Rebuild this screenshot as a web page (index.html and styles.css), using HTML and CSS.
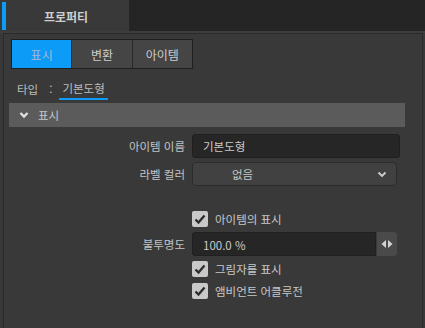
FILE: index.html
```html
<!DOCTYPE html>
<html lang="ko">
  <head>
    <meta charset="UTF-8" />
    <meta name="viewport" content="width=device-width, initial-scale=1.0" />
    <title>프로퍼티</title>
    <link rel="stylesheet" href="styles.css">
  </head>
  <body>
    <div class="tabbar">
      <div class="tab">
        <span class="tab-mark"></span>
        <span class="tab-title">프로퍼티</span>
      </div>
    </div>
    <div class="tabbar-line"></div>

    <div class="panel">
      <div class="segmented">
        <button class="seg active">표시</button>
        <button class="seg">변환</button>
        <button class="seg">아이템</button>
      </div>

      <div class="type-row">
        <span>타입</span>
        <span class="colon">:</span>
        <span class="type-value">기본도형</span>
      </div>

      <div class="section-head">
        <svg class="chev" width="10" height="8" viewBox="0 0 10 8">
          <path d="M1.5 2 L5 5.5 L8.5 2" fill="none" stroke="#e2e2e2" stroke-width="2.4" />
        </svg>
        <span>표시</span>
      </div>

      <div class="form">
        <div class="row">
          <label class="label">아이템 이름</label>
          <div class="text-input">기본도형</div>
        </div>

        <div class="row">
          <label class="label">라벨 컬러</label>
          <div class="select">
            <span>없음</span>
            <svg width="10" height="7" viewBox="0 0 10 7">
              <path d="M1.5 1.5 L5 5 L8.5 1.5" fill="none" stroke="#cfcfcf" stroke-width="1.8" />
            </svg>
          </div>
        </div>

        <div class="spacer"></div>

        <div class="row check-row">
          <span class="label"></span>
          <label class="check">
            <span class="box">
              <svg width="16" height="16" viewBox="0 0 16 16">
                <path d="M3.5 8.5 L6.5 11.5 L12.5 4.5" fill="none" stroke="#2e2e2e" stroke-width="2.4" />
              </svg>
            </span>
            아이템의 표시
          </label>
        </div>

        <div class="row spin-row">
          <label class="label">불투명도</label>
          <div class="spin">
            <div class="spin-input">100.0 %</div>
            <div class="spin-btn">
              <svg width="14" height="10" viewBox="0 0 14 10">
                <path d="M6 1 L1.5 5 L6 9 Z" fill="#d4d4d4" />
                <path d="M8 1 L12.5 5 L8 9 Z" fill="#d4d4d4" />
              </svg>
            </div>
          </div>
        </div>

        <div class="row check-row">
          <span class="label"></span>
          <label class="check">
            <span class="box">
              <svg width="16" height="16" viewBox="0 0 16 16">
                <path d="M3.5 8.5 L6.5 11.5 L12.5 4.5" fill="none" stroke="#2e2e2e" stroke-width="2.4" />
              </svg>
            </span>
            그림자를 표시
          </label>
        </div>

        <div class="row check-row">
          <span class="label"></span>
          <label class="check">
            <span class="box">
              <svg width="16" height="16" viewBox="0 0 16 16">
                <path d="M3.5 8.5 L6.5 11.5 L12.5 4.5" fill="none" stroke="#2e2e2e" stroke-width="2.4" />
              </svg>
            </span>
            앰비언트 어클루전
          </label>
        </div>
      </div>
    </div>
  </body>
</html>
```

FILE: styles.css
```css
body {
  margin: 0;
  background-color: #383838;
  font-family: "Noto Sans CJK KR", "Noto Sans", sans-serif;
  font-size: 11.5px;
  color: #c4c4c4;
  height: 328px;
  overflow: hidden;
}

.tabbar {
  height: 31px;
  background-color: #252525;
  display: flex;
}

.tab {
  width: 127px;
  padding: 2px 0 1px 2px;
  background-color: #393939;
  display: flex;
  align-items: center;
}

.tab-mark {
  width: 4px;
  align-self: stretch;
  background-color: #0c9bf7;
}

.tab-title {
  flex: 1;
  text-align: center;
  font-weight: bold;
  font-size: 12px;
  color: #cfcfcf;
  padding-right: 3px;
}

.tabbar-line {
  height: 2px;
  background-color: #3d3d3d;
}

.panel {
  margin: 0 2px 0 3px;
  height: 300px;
  border: 1px solid #2a2a2a;
  border-bottom: none;
  background-color: #393939;
}

.segmented {
  display: flex;
  width: 180px;
  margin: 5px 0 0 7px;
  border: 1px solid #1f1f1f;
  gap: 1px;
  background-color: #2a2a2a;
}

.seg {
  flex: 1;
  height: 28px;
  border: none;
  padding: 0;
  background-color: #454545;
  color: #cdcdcd;
  font-family: inherit;
  font-size: 12px;
}

.seg.active {
  background-color: #0c9bf7;
  color: #a9b6d6;
}

.type-row {
  display: flex;
  align-items: center;
  height: 22px;
  margin: 9px 0 0 13px;
  color: #bdbdbd;
}

.colon {
  margin: 0 7px 0 11px;
}

.type-value {
  padding: 0 3px;
  border-bottom: 2px solid #0c9bf7;
  line-height: 20px;
}

.section-head {
  display: flex;
  align-items: center;
  height: 24px;
  margin: 3px 17px 0 5px;
  padding-left: 10px;
  background-color: #5b5b5b;
  color: #c8c8c8;
}

.chev {
  margin-right: 9px;
}

.form {
  display: flex;
  flex-direction: column;
  gap: 2px;
  margin-top: 6px;
}

.row {
  display: flex;
  align-items: center;
  height: 26px;
}

.check-row {
  height: 20px;
}

.spacer {
  height: 18px;
}

.label {
  width: 181px;
  text-align: right;
  margin-right: 7px;
  color: #c4c4c4;
}

.text-input {
  width: 196px;
  height: 22px;
  line-height: 22px;
  padding-left: 10px;
  background-color: #262626;
  border: 1px solid #202020;
  border-radius: 3px;
  color: #cacaca;
}

.select {
  height: 22px;
  display: flex;
  align-items: center;
  justify-content: space-between;
  padding: 0 9px 0 39px;
  width: 155px;
  background-color: #414141;
  border: 1px solid #2b2b2b;
  border-radius: 4px;
  color: #c6c6c6;
}

.check {
  display: flex;
  align-items: center;
  gap: 7px;
  color: #c8c8c8;
}

.box {
  width: 16px;
  height: 16px;
  border-radius: 2px;
  background-color: #c9c9c9;
  display: flex;
}

.spin {
  display: flex;
  width: 205px;
  height: 24px;
}

.spin-input {
  flex: 1;
  line-height: 24px;
  padding-left: 10px;
  background-color: #262626;
  border: 1px solid #202020;
  border-radius: 3px 0 0 3px;
  color: #cacaca;
}

.spin-btn {
  width: 20px;
  margin-left: 1px;
  display: flex;
  align-items: center;
  justify-content: center;
  background-color: #4a4a4a;
  border-radius: 0 4px 4px 0;
}
```
